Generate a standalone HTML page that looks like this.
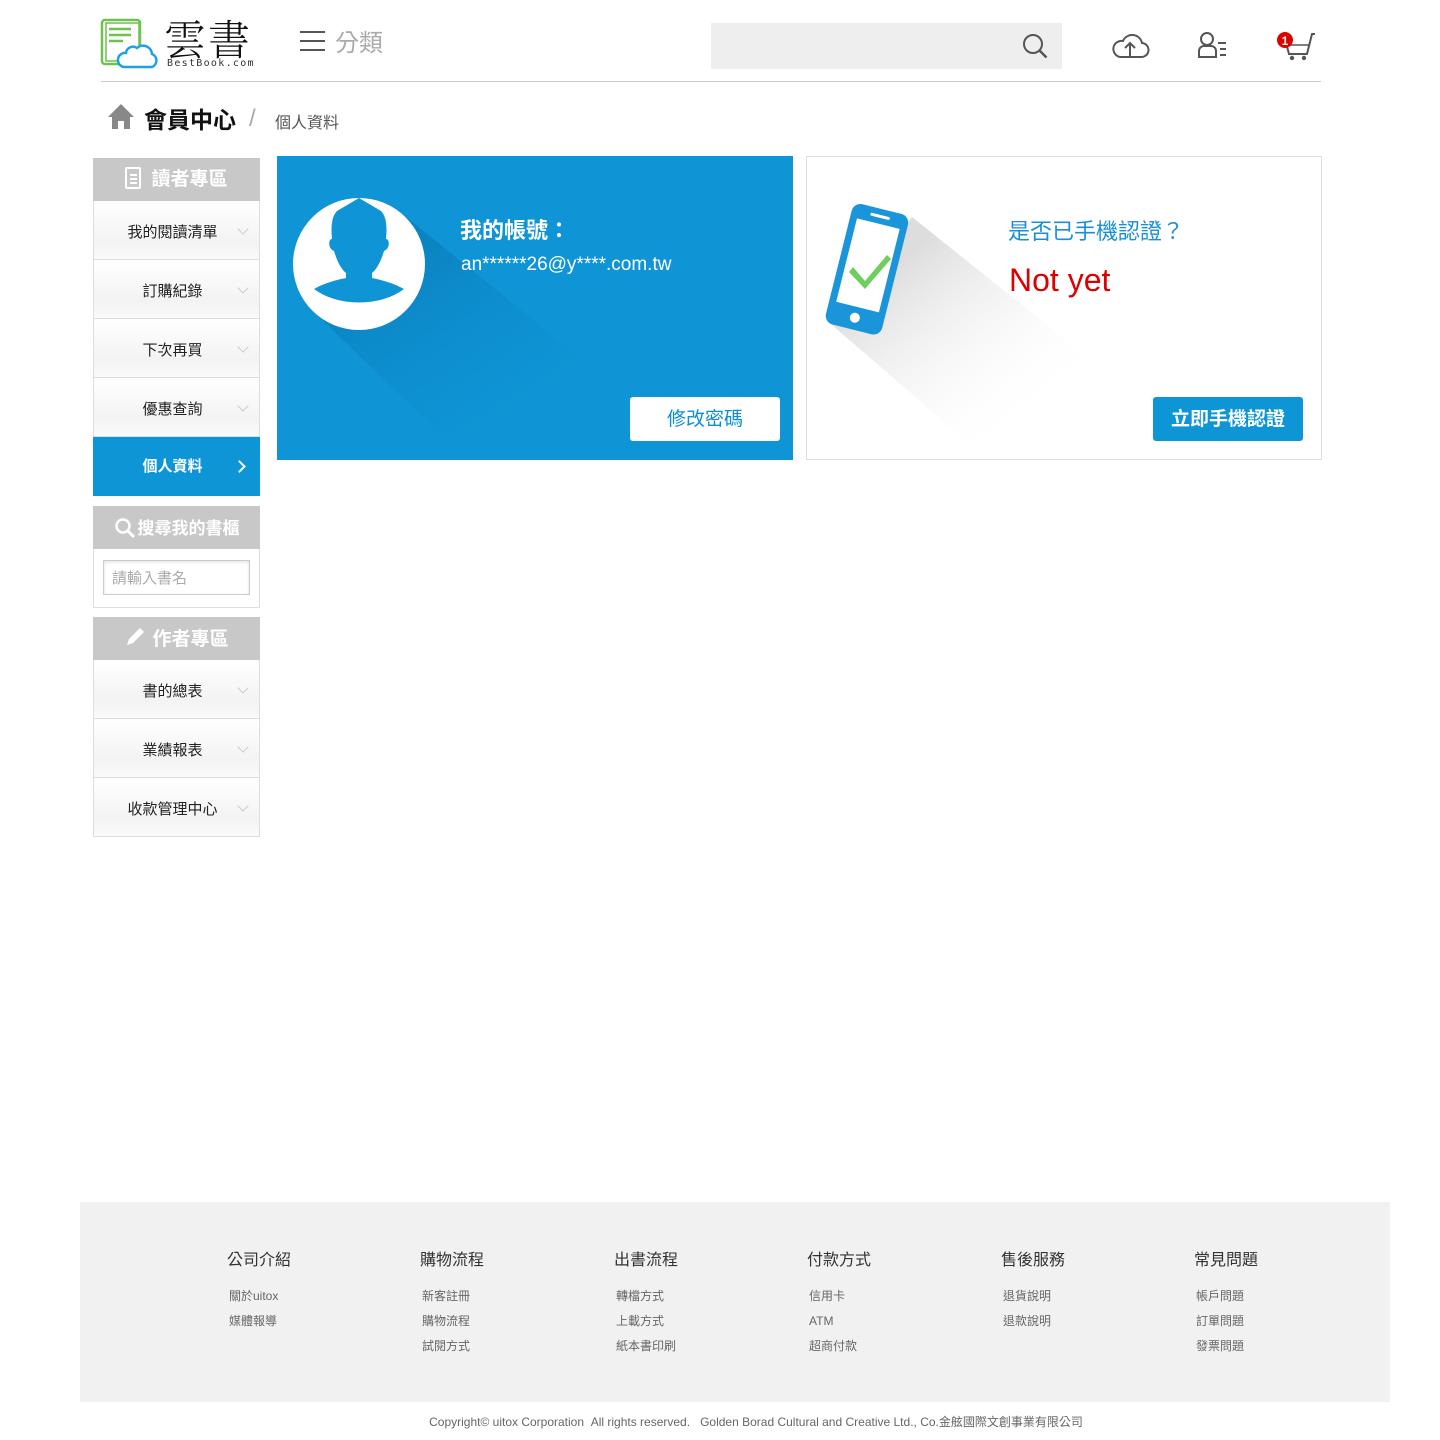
<!DOCTYPE html>
<html><head><meta charset="utf-8"><style>
*{margin:0;padding:0;box-sizing:border-box}
body{width:1440px;height:1440px;background:#fff;font-family:"Liberation Sans","Noto Sans CJK TC",sans-serif;position:relative;overflow:hidden;color:#222}
.a{position:absolute}
.sb{position:absolute;left:93px;width:167px}
.hd{background:#c8c8c8;color:#fff;font-size:19px;text-align:center;height:43px;line-height:43px;font-weight:bold}
.it{height:59px;border:1px solid #ddd;border-top:none;background:linear-gradient(#fff,#f3f3f3 70%,#fafafa);font-size:15px;text-align:center;line-height:64px;position:relative;padding-right:8px}
.it:after{content:"";position:absolute;right:12px;top:24px;width:7px;height:7px;border-right:1.5px solid #ccc;border-bottom:1.5px solid #ccc;transform:rotate(45deg)}
.it.on{background:#0e95d6;color:#fff;border-color:#0e95d6;font-weight:bold;line-height:60px}
.it.on:after{border-color:#fff;border-width:2.5px;transform:rotate(-45deg);top:25px;right:15px}
.fc{position:absolute;top:1246px;font-size:16px;color:#333}
.fc div{font-size:12px;color:#666;margin-top:20px;line-height:13px;padding-left:2px}
.fc div+div{margin-top:12px}
</style></head><body>
<svg class="a" style="left:100px;top:18px" width="62" height="52" viewBox="0 0 62 52">
<rect x="2" y="2" width="38" height="44" rx="3" fill="#fff" stroke="#6cc24a" stroke-width="2.5"/>
<rect x="6" y="5" width="33" height="38" fill="none" stroke="#6cc24a" stroke-width="1.5"/>
<path d="M9 11h22M9 17h22M9 23h14" stroke="#6cc24a" stroke-width="2.5"/>
<path d="M24 49h28a7 7 0 0 0 0-13a9 9 0 0 0-15-6a7 7 0 0 0-11 5a7 7 0 0 0-2 14z" fill="#fff" stroke="#1ea0e6" stroke-width="2.5"/>
</svg>
<div class="a" style="left:164px;top:14px;font-size:42px;line-height:48px;letter-spacing:2px;font-family:'Noto Serif CJK SC','Noto Sans CJK TC',serif;color:#111;font-weight:300">雲書</div>
<div class="a" style="left:167px;top:58px;font-size:10px;letter-spacing:1.3px;color:#333;font-family:'DejaVu Sans Mono',monospace">BestBook.com</div>
<svg class="a" style="left:300px;top:30px" width="26" height="22"><path d="M0 2h25M0 11h25M0 20h25" stroke="#555" stroke-width="2"/></svg>
<div class="a" style="left:335px;top:23px;font-size:24px;color:#aaa">分類</div>
<div class="a" style="left:711px;top:23px;width:351px;height:46px;background:#eee"></div>
<svg class="a" style="left:1021px;top:32px" width="28" height="28"><circle cx="12" cy="12" r="9" fill="none" stroke="#555" stroke-width="2"/><path d="M18.5 18.5l7 7" stroke="#555" stroke-width="2.5"/></svg>
<svg class="a" style="left:1110px;top:32px" width="40" height="28"><path d="M10 25h21a7 7 0 0 0 1-14a10 10 0 0 0-19-2a8 8 0 0 0-3 16z" fill="none" stroke="#555" stroke-width="2"/><path d="M20 24v-12M15 16l5-5 5 5" fill="none" stroke="#555" stroke-width="2"/></svg>
<svg class="a" style="left:1196px;top:31px" width="34" height="30"><circle cx="11" cy="8" r="6" fill="none" stroke="#555" stroke-width="2"/><path d="M3 26v-6a5 5 0 0 1 5-5h7a5 5 0 0 1 5 5v6z" fill="none" stroke="#555" stroke-width="2"/><path d="M22 12h8M24 18h6M24 24h6" stroke="#555" stroke-width="2"/></svg>
<svg class="a" style="left:1272px;top:30px" width="46" height="32"><path d="M8 9h5l4 15h18l5-20h3" fill="none" stroke="#555" stroke-width="2"/><path d="M16 15h22" stroke="#555" stroke-width="1.5"/><circle cx="20" cy="28" r="2.2" fill="#555"/><circle cx="32" cy="28" r="2.2" fill="#555"/><circle cx="13" cy="10" r="8" fill="#d00"/><text x="13" y="15" font-size="12" font-weight="bold" fill="#fff" text-anchor="middle" font-family="Liberation Sans">1</text></svg>
<div class="a" style="left:101px;top:81px;width:1220px;height:1px;background:#ccc"></div>
<svg class="a" style="left:107px;top:103px" width="28" height="27"><path d="M14 1L1 14h4v12h6v-8h6v8h6V14h4z" fill="#888"/></svg>
<div class="a" style="left:144px;top:101px;font-size:23px;font-weight:bold;color:#111">會員中心</div>
<div class="a" style="left:249px;top:105px;font-size:24px;color:#aaa">/</div>
<div class="a" style="left:275px;top:109px;font-size:16px;color:#555">個人資料</div>
<div class="sb" style="top:158px">
<div class="hd"><span style="display:inline-block;width:16px;height:22px;border:2px solid #fff;border-radius:2px;vertical-align:-4px;margin-right:10px;position:relative"><span style="position:absolute;left:3px;top:5px;width:7px;border-top:2px solid #fff;box-shadow:0 4px 0 #fff,0 8px 0 #fff;height:0"></span></span>讀者專區</div>
<div class="it">我的閱讀清單</div><div class="it">訂購紀錄</div><div class="it">下次再買</div><div class="it">優惠查詢</div><div class="it on">個人資料</div>
</div>
<div class="sb" style="top:506px">
<div class="hd" style="font-size:17px;line-height:46px"><svg width="22" height="22" style="vertical-align:-5px;margin-right:2px"><circle cx="9" cy="9" r="6.5" fill="none" stroke="#fff" stroke-width="2.5"/><path d="M14 14l6 6" stroke="#fff" stroke-width="3"/></svg>搜尋我的書櫃</div>
<div style="height:59px;border:1px solid #ddd;border-top:none;padding:11px 9px"><div style="height:35px;border:1px solid #ccc;box-shadow:inset 0 1px 3px #ddd;font-size:15px;color:#aaa;line-height:35px;padding-left:8px">請輸入書名</div></div>
</div>
<div class="sb" style="top:617px">
<div class="hd" style="line-height:46px"><svg width="22" height="22" style="vertical-align:-3px;margin-right:6px"><path d="M3 19l2-6 11-11 4 4-11 11z" fill="#fff"/></svg>作者專區</div>
<div class="it">書的總表</div><div class="it">業績報表</div><div class="it">收款管理中心</div>
</div>
<div class="a" style="left:277px;top:156px;width:516px;height:304px;background:#0f95d6;overflow:hidden">
<svg class="a" style="left:0;top:0" width="516" height="304"><defs><linearGradient id="g1" x1="0" y1="0" x2="1" y2="1"><stop offset="0.2" stop-color="#0a7fbd" stop-opacity=".8"/><stop offset="0.8" stop-color="#0f95d6" stop-opacity="0"/></linearGradient></defs><polygon points="128,60 35,154 190,304 430,304" fill="url(#g1)"/>
<circle cx="82" cy="108" r="66" fill="#fff"/>
<path d="M82 42l-22 13c-6 6-6 18-5 28c-4 0-4 10 2 12c3 10 7 18 12 22l0 5c-15 3-25 7-32 11a60 40 0 0 0 90 0c-7-4-17-8-32-11l0-5c5-4 9-12 12-22c6-2 6-12 2-12c1-10 1-22-5-28z" fill="#0f95d6"/></svg>
<div class="a" style="left:183px;top:57px;font-size:22px;font-weight:bold;color:#fff">我的帳號：</div>
<div class="a" style="left:184px;top:98px;font-size:19px;color:#fff">an******26@y****.com.tw</div>
<div class="a" style="left:353px;top:241px;width:150px;height:44px;background:#fff;border-radius:3px;color:#0f8fd2;font-size:19px;text-align:center;line-height:46px">修改密碼</div>
</div>
<div class="a" style="left:806px;top:156px;width:516px;height:304px;border:1px solid #ddd;overflow:hidden">
<svg class="a" style="left:0;top:0" width="514" height="302"><defs><linearGradient id="g2" x1="0" y1="0" x2="1" y2="1"><stop offset="0.2" stop-color="#ddd"/><stop offset="0.75" stop-color="#fff" stop-opacity="0"/></linearGradient></defs><polygon points="105,60 25,168 180,302 330,302 330,240" fill="url(#g2)"/>
<g transform="translate(14 0) rotate(14 45 112)"><rect x="17" y="50" width="58" height="124" rx="9" fill="#1a95d9"/><rect x="24" y="65" width="44" height="86" fill="#fff"/><rect x="36" y="56" width="20" height="3" rx="1.5" fill="#fff"/><circle cx="46" cy="162" r="5" fill="#fff"/></g>
<path d="M46 110l12 14 22-26 4 4-26 30-16-17z" fill="#6ccf5e"/></svg>
<div class="a" style="left:201px;top:57px;font-size:22px;color:#1a8fd6">是否已手機認證？</div>
<div class="a" style="left:202px;top:105px;font-size:32px;color:#d00">Not yet</div>
<div class="a" style="left:346px;top:240px;width:150px;height:44px;background:#0e95d6;border-radius:3px;color:#fff;font-size:19px;font-weight:bold;text-align:center;line-height:46px">立即手機認證</div>
</div>
<div class="a" style="left:80px;top:1202px;width:1310px;height:200px;background:#f1f1f1"></div>
<div class="fc" style="left:227px">公司介紹<div>關於uitox</div><div>媒體報導</div></div>
<div class="fc" style="left:420px">購物流程<div>新客註冊</div><div>購物流程</div><div>試閱方式</div></div>
<div class="fc" style="left:614px">出書流程<div>轉檔方式</div><div>上載方式</div><div>紙本書印刷</div></div>
<div class="fc" style="left:807px">付款方式<div>信用卡</div><div>ATM</div><div>超商付款</div></div>
<div class="fc" style="left:1001px">售後服務<div>退貨說明</div><div>退款說明</div></div>
<div class="fc" style="left:1194px">常見問題<div>帳戶問題</div><div>訂單問題</div><div>發票問題</div></div>
<div class="a" style="left:0;width:1512px;top:1413px;text-align:center;font-size:12px;color:#666">Copyright© uitox Corporation &nbsp;All rights reserved. &nbsp; Golden Borad Cultural and Creative Ltd., Co.金舷國際文創事業有限公司</div>
</body></html>
